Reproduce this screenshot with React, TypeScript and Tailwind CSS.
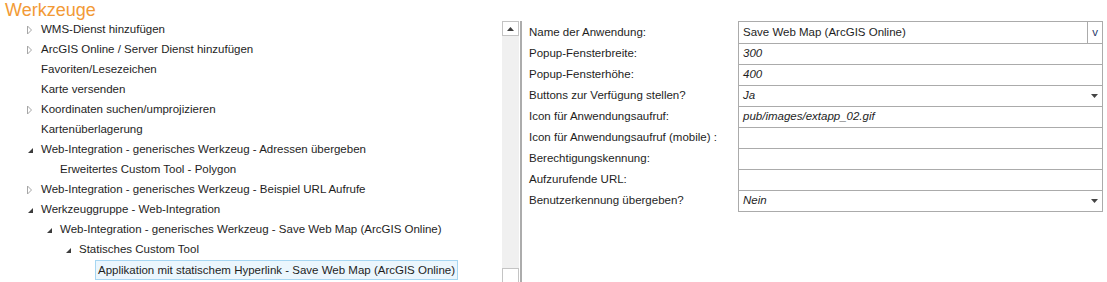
import React from "react"

type Node = {
  label: string
  level: number
  state?: "collapsed" | "expanded"
  selected?: boolean
}

const tree: Node[] = [
  { label: "WMS-Dienst hinzufügen", level: 0, state: "collapsed" },
  { label: "ArcGIS Online / Server Dienst hinzufügen", level: 0, state: "collapsed" },
  { label: "Favoriten/Lesezeichen", level: 0 },
  { label: "Karte versenden", level: 0 },
  { label: "Koordinaten suchen/umprojizieren", level: 0, state: "collapsed" },
  { label: "Kartenüberlagerung", level: 0 },
  { label: "Web-Integration - generisches Werkzeug - Adressen übergeben", level: 0, state: "expanded" },
  { label: "Erweitertes Custom Tool - Polygon", level: 1 },
  { label: "Web-Integration - generisches Werkzeug - Beispiel URL Aufrufe", level: 0, state: "collapsed" },
  { label: "Werkzeuggruppe - Web-Integration", level: 0, state: "expanded" },
  { label: "Web-Integration - generisches Werkzeug - Save Web Map (ArcGIS Online)", level: 1, state: "expanded" },
  { label: "Statisches Custom Tool", level: 2, state: "expanded" },
  { label: "Applikation mit statischem Hyperlink - Save Web Map (ArcGIS Online)", level: 3, selected: true },
]

const indent = ["pl-[27px]", "pl-[46px]", "pl-[65px]", "pl-[84px]"]

type Field = {
  label: string
  value?: string
  italic?: boolean
  kind?: "combo" | "select"
}

const fields: Field[] = [
  { label: "Name der Anwendung:", value: "Save Web Map (ArcGIS Online)", kind: "combo" },
  { label: "Popup-Fensterbreite:", value: "300", italic: true },
  { label: "Popup-Fensterhöhe:", value: "400", italic: true },
  { label: "Buttons zur Verfügung stellen?", value: "Ja", italic: true, kind: "select" },
  { label: "Icon für Anwendungsaufruf:", value: "pub/images/extapp_02.gif", italic: true },
  { label: "Icon für Anwendungsaufruf (mobile) :" },
  { label: "Berechtigungskennung:" },
  { label: "Aufzurufende URL:" },
  { label: "Benutzerkennung übergeben?", value: "Nein", italic: true, kind: "select" },
]

function Expander({ state }: { state?: Node["state"] }) {
  if (state === "collapsed") {
    return (
      <svg width="14" height="20" viewBox="0 0 14 20">
        <path d="M0.5 6 L0.5 14 L4.5 10 Z" fill="none" stroke="#a6a6a6" strokeWidth="1" />
      </svg>
    )
  }
  if (state === "expanded") {
    return (
      <svg width="14" height="20" viewBox="0 0 14 20">
        <path d="M6 8 L6 13 L1 13 Z" fill="#3c3c3c" />
      </svg>
    )
  }
  return <span className="w-[14px]" />
}

function DropArrow() {
  return (
    <svg width="7" height="4" viewBox="0 0 7 4">
      <path d="M0 0 H7 L3.5 4 Z" fill="#444" />
    </svg>
  )
}

export default function App() {
  return (
    <div
      className="flex w-[1107px] h-[282px] overflow-hidden bg-white text-[11.5px] text-[#1e1e1e]"
      style={{ fontFamily: '"Liberation Sans", Arial, sans-serif' }}
    >
      {/* Tree */}
      <div className="w-[502px] flex flex-col">
        <div className="h-[20px] pl-[5px] text-[18px] leading-[21px] text-[#f29a36]">Werkzeuge</div>
        {tree.map((n, i) => (
          <div key={i} className={`h-[20px] flex items-center whitespace-nowrap ${indent[n.level]}`}>
            <Expander state={n.state} />
            {n.selected ? (
              <span className="h-[20px] leading-[18px] -ml-[3px] px-[2px] border border-[#a6d6f2] bg-[#ebf6fd]">
                {n.label}
              </span>
            ) : (
              <span>{n.label}</span>
            )}
          </div>
        ))}
      </div>

      {/* Scrollbar */}
      <div className="w-[17px] pt-[21px] flex flex-col">
        <div className="h-[15px] border border-[#c4c4c4] bg-white flex items-center justify-center">
          <svg width="7" height="4" viewBox="0 0 7 4">
            <path d="M3.5 0 L7 4 H0 Z" fill="#404040" />
          </svg>
        </div>
        <div className="flex-1 bg-[#f0f0f0]" />
        <div className="h-[14px] border border-b-0 border-[#c4c4c4] bg-white" />
      </div>
      <div className="ml-[1px] mt-[21px] w-[2px] bg-[#acacac]" />

      {/* Properties */}
      <div className="pl-[7px] pt-[21px] flex">
        <div className="w-[209px] pt-[1px]">
          {fields.map((f, i) => (
            <div key={i} className="h-[21px] flex items-center whitespace-nowrap">
              {f.label}
            </div>
          ))}
        </div>
        <div className="w-[365px] self-start border border-[#ababab]">
          {fields.map((f, i) => (
            <div
              key={i}
              className={`h-[21px] flex items-center ${i > 0 ? "border-t border-[#ababab]" : "h-[20px]"}`}
            >
              <span className={`flex-1 pl-[4px] whitespace-nowrap ${f.italic ? "italic" : ""}`}>{f.value}</span>
              {f.kind === "combo" && (
                <span className="w-[15px] h-full border-l border-[#ababab] flex items-center justify-center text-[#2a3a6a]">
                  v
                </span>
              )}
              {f.kind === "select" && (
                <span className="w-[15px] flex items-center justify-center">
                  <DropArrow />
                </span>
              )}
            </div>
          ))}
        </div>
      </div>
    </div>
  )
}
